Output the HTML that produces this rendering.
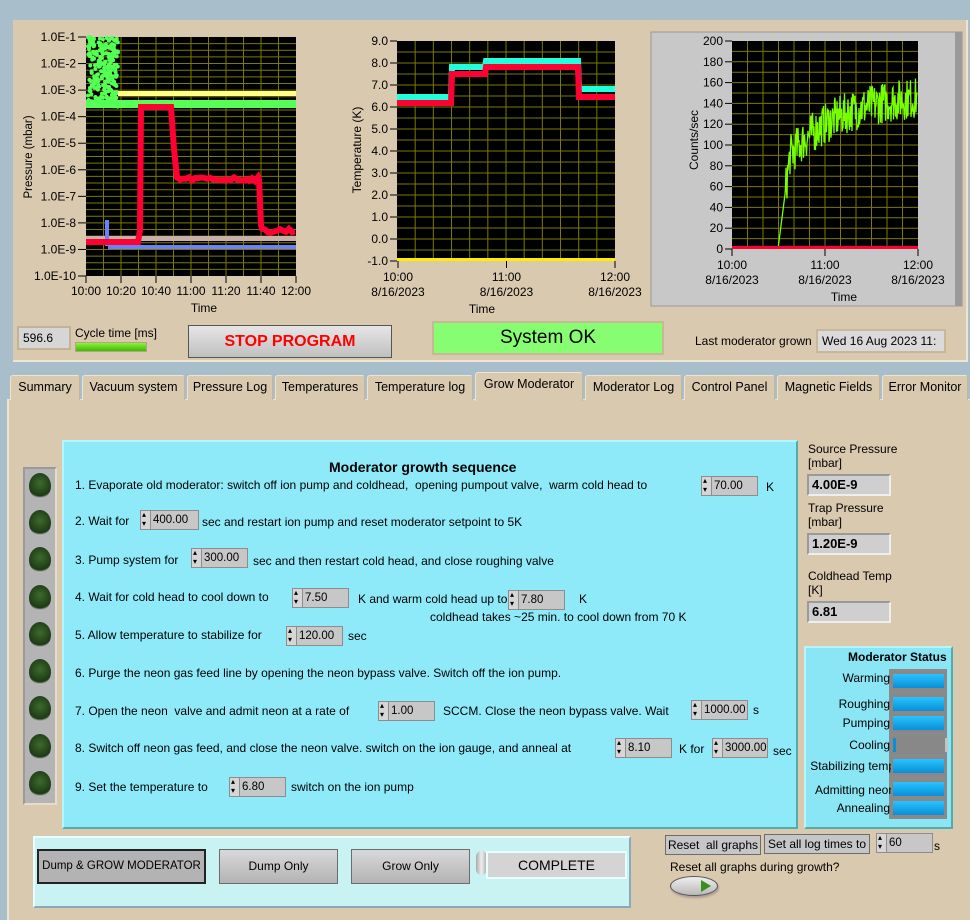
<!DOCTYPE html>
<html><head><meta charset="utf-8"><style>
*{margin:0;padding:0;box-sizing:border-box}
body{width:970px;height:920px;background:#a8bfcb;font-family:"Liberation Sans",sans-serif;font-size:12px;color:#000;position:relative;overflow:hidden}
.a{position:absolute}
.panel{background:#d9c9af}
.tab{position:absolute;top:375px;height:25px;background:#d9c9af;border:1px solid #c6b698;border-bottom:none;border-top:1px solid #efe4d0;border-left:1px solid #efe4d0;text-align:center;line-height:23px;font-size:12.5px;border-radius:3px 3px 0 0}
.sp{position:absolute;height:20px;background:#c7c7c7;border:1px solid #8d8d8d;font-size:11.5px;line-height:18px;padding-left:12px;white-space:nowrap;overflow:hidden}
.sp:before{content:"";position:absolute;left:0;top:0;width:9px;height:18px;background:#d6d6d6;border-right:1px solid #8d8d8d}
.sp:after{content:"▴\A▾";white-space:pre;position:absolute;left:1px;top:-1px;font-size:8px;line-height:9px}
.t{position:absolute;font-size:12px;white-space:nowrap}
.led{position:absolute;left:29px;width:22px;height:26px;border-radius:50%;background:radial-gradient(circle at 50% 40%,#3e6a2e,#1c3a14 65%,#a9a9a9 75%,#e0e0e0 90%)}
.ind{position:absolute;background:#cfcfcf;border:2px solid #9a9a9a;border-right-color:#eee;border-bottom-color:#eee;font-weight:bold;font-size:13px;line-height:17px;padding-left:3px}
.bar{position:absolute;left:891px;width:55px;height:18px;background:#888;padding:2px}
.bar i{display:block;height:14px;background:linear-gradient(#27c3ff,#0a8fd6)}
.btn{position:absolute;background:linear-gradient(#d9d9d9,#b3b3b3);border:1px solid #6c6c6c;text-align:center;font-size:12px;white-space:nowrap}
.sl{position:absolute;font-size:12px;text-align:right;width:80px;left:810px}
</style></head><body>
<div class="a panel" style="left:13px;top:20px;width:955px;height:342px;border-right:2px solid #efe4d0;border-bottom:2px solid #efe4d0"></div>
<svg class="a" style="left:0;top:0" width="970" height="370" id="charts" font-family="Liberation Sans" font-size="12"></svg>
<div class="a" style="left:17px;top:326px;width:54px;height:24px;background:#d6d6d6;border:2px solid #c2b394;padding:3px 4px;font-size:12px">596.6</div>
<div class="t" style="left:75px;top:326px">Cycle time [ms]</div>
<div class="a" style="left:75px;top:342px;width:72px;height:10px;background:linear-gradient(#8ef040,#3eb800);border:1px solid #b4a58a"></div>
<div class="a" style="left:188px;top:325px;width:204px;height:33px;background:linear-gradient(#e6e6e6,#c0c0c0);border:1px solid #555;color:#f00;font-weight:bold;font-size:16px;text-align:center;line-height:31px">STOP PROGRAM</div>
<div class="a" style="left:432px;top:321px;width:232px;height:34px;background:#87fd71;border:2px solid #c8b898;font-size:19px;text-align:center;line-height:30px">System OK</div>
<div class="t" style="left:695px;top:334px">Last moderator grown</div>
<div class="a" style="left:816px;top:329px;width:130px;height:24px;background:#dadada;border:2px solid #c8b898;padding:3px 4px;font-size:12px;white-space:nowrap;overflow:hidden">Wed 16 Aug 2023 11:</div>
<div class="a panel" style="left:7px;top:399px;width:963px;height:521px;border-left:2px solid #efe4d0;border-top:1px solid #efe4d0"></div>
<div class="tab" style="left:10px;width:70px">Summary</div>
<div class="tab" style="left:82px;width:103px">Vacuum system</div>
<div class="tab" style="left:187px;width:86px">Pressure Log</div>
<div class="tab" style="left:275px;width:90px">Temperatures</div>
<div class="tab" style="left:367px;width:106px">Temperature log</div>
<div class="tab" style="left:475px;width:108px;top:372px;height:29px;border-bottom:none">Grow Moderator</div>
<div class="tab" style="left:585px;width:97px">Moderator Log</div>
<div class="tab" style="left:684px;width:91px">Control Panel</div>
<div class="tab" style="left:777px;width:103px">Magnetic Fields</div>
<div class="tab" style="left:882px;width:86px">Error Monitor</div>
<div class="a" style="left:23px;top:467px;width:34px;height:338px;background:#b4b4b4;border:2px solid #9a9a9a;border-right-color:#e6dccb;border-bottom-color:#e6dccb"></div>
<div class="led" style="top:473px"></div><div class="led" style="top:510px"></div><div class="led" style="top:547px"></div><div class="led" style="top:585px"></div><div class="led" style="top:622px"></div><div class="led" style="top:659px"></div><div class="led" style="top:696px"></div><div class="led" style="top:734px"></div><div class="led" style="top:771px"></div>
<div class="a" style="left:62px;top:440px;width:736px;height:389px;background:#8eeaf9;border:2px solid #b4f6ff;border-right-color:#5aa;border-bottom-color:#5aa"></div>
<div class="t" style="left:329px;top:459px;font-weight:bold;font-size:14px">Moderator growth sequence</div>
<div class="t" style="left:75px;top:478px">1. Evaporate old moderator: switch off ion pump and coldhead,&nbsp; opening pumpout valve,&nbsp; warm cold head to</div>
<div class="sp" style="left:701px;top:476px;width:57px">70.00</div><div class="t" style="left:766px;top:480px">K</div>
<div class="t" style="left:75px;top:514px">2. Wait for</div><div class="sp" style="left:140px;top:510px;width:59px">400.00</div><div class="t" style="left:202px;top:515px">sec and restart ion pump and reset moderator setpoint to 5K</div>
<div class="t" style="left:75px;top:553px">3. Pump system for</div><div class="sp" style="left:191px;top:548px;width:57px">300.00</div><div class="t" style="left:253px;top:554px">sec and then restart cold head, and close roughing valve</div>
<div class="t" style="left:75px;top:590px">4. Wait for cold head to cool down to</div><div class="sp" style="left:292px;top:588px;width:57px">7.50</div><div class="t" style="left:358px;top:592px">K and warm cold head up to</div><div class="sp" style="left:508px;top:590px;width:57px">7.80</div><div class="t" style="left:579px;top:592px">K</div>
<div class="t" style="left:430px;top:610px">coldhead takes ~25 min. to cool down from 70 K</div>
<div class="t" style="left:75px;top:628px">5. Allow temperature to stabilize for</div><div class="sp" style="left:286px;top:626px;width:57px">120.00</div><div class="t" style="left:348px;top:629px">sec</div>
<div class="t" style="left:75px;top:666px">6. Purge the neon gas feed line by opening the neon bypass valve. Switch off the ion pump.</div>
<div class="t" style="left:75px;top:704px">7. Open the neon&nbsp; valve and admit neon at a rate of</div><div class="sp" style="left:378px;top:701px;width:57px">1.00</div><div class="t" style="left:443px;top:704px">SCCM. Close the neon bypass valve. Wait</div><div class="sp" style="left:691px;top:700px;width:57px">1000.00</div><div class="t" style="left:753px;top:703px">s</div>
<div class="t" style="left:75px;top:741px">8. Switch off neon gas feed, and close the neon valve. switch on the ion gauge, and anneal at</div><div class="sp" style="left:615px;top:738px;width:57px">8.10</div><div class="t" style="left:679px;top:742px">K for</div><div class="sp" style="left:712px;top:738px;width:56px">3000.00</div><div class="t" style="left:773px;top:744px">sec</div>
<div class="t" style="left:75px;top:780px">9. Set the temperature to</div><div class="sp" style="left:229px;top:777px;width:57px">6.80</div><div class="t" style="left:291px;top:780px">switch on the ion pump</div>
<div class="t" style="left:808px;top:442px">Source Pressure<br>[mbar]</div>
<div class="ind" style="left:807px;top:474px;width:84px;height:22px">4.00E-9</div>
<div class="t" style="left:808px;top:501px">Trap Pressure<br>[mbar]</div>
<div class="ind" style="left:807px;top:533px;width:84px;height:22px">1.20E-9</div>
<div class="t" style="left:808px;top:569px">Coldhead Temp<br>[K]</div>
<div class="ind" style="left:807px;top:601px;width:84px;height:22px">6.81</div>
<div class="a" style="left:804px;top:646px;width:149px;height:183px;background:#8ae5f4;border:2px solid #b8f4fc;border-right-color:#5aa;border-bottom-color:#5aa"></div>
<div class="t" style="left:848px;top:650px;font-weight:bold">Moderator Status</div>
<div class="a" style="left:889px;top:669px;width:58px;height:150px;background:#8a8a8a"></div>
<div class="sl" style="top:671px">Warming</div><div class="bar" style="top:672px"><i></i></div>
<div class="sl" style="top:697px">Roughing</div><div class="bar" style="top:695px"><i></i></div>
<div class="sl" style="top:716px">Pumping</div><div class="bar" style="top:714px"><i></i></div>
<div class="sl" style="top:738px">Cooling</div><div class="bar" style="top:736px"><i style="width:3px;background:#0a8fd6;box-shadow:52px 0 0 #c4c4c4"></i></div>
<div class="sl" style="top:759px;left:800px;width:95px">Stabilizing temp</div><div class="bar" style="top:757px"><i></i></div>
<div class="sl" style="top:783px;left:800px;width:95px">Admitting neon</div><div class="bar" style="top:780px"><i></i></div>
<div class="sl" style="top:801px">Annealing</div><div class="bar" style="top:799px"><i></i></div>
<div class="a" style="left:33px;top:836px;width:598px;height:72px;background:#c9f3f2;border:2px solid #e8fdfd;border-right-color:#8ab;border-bottom-color:#8ab"></div>
<div class="btn" style="left:37px;top:849px;width:169px;height:35px;line-height:31px;border:2px solid #222;background:#b3b3b3;font-size:11.5px">Dump &amp; GROW MODERATOR</div>
<div class="btn" style="left:219px;top:849px;width:119px;height:35px;line-height:33px">Dump Only</div>
<div class="btn" style="left:351px;top:849px;width:119px;height:35px;line-height:33px">Grow Only</div>
<div class="a" style="left:476px;top:851px;width:11px;height:24px;border-radius:6px;background:linear-gradient(90deg,#aaa,#eee,#aaa)"></div>
<div class="a" style="left:486px;top:851px;width:141px;height:28px;background:#d4d4d4;border:2px solid #e6ffff;text-align:center;line-height:24px;font-size:14px">COMPLETE</div>
<div class="btn" style="left:665px;top:835px;width:96px;height:20px;line-height:18px;background:#c6c6c6">Reset&nbsp; all graphs</div>
<div class="btn" style="left:764px;top:834px;width:106px;height:20px;line-height:18px;background:#c6c6c6">Set all log times to</div>
<div class="sp" style="left:876px;top:833px;width:57px">60</div><div class="t" style="left:934px;top:839px">s</div>
<div class="t" style="left:670px;top:860px">Reset all graphs during growth?</div>
<div class="a" style="left:670px;top:876px;width:48px;height:20px;border-radius:50%;background:linear-gradient(#eee,#b9b9b9);border:1px solid #555;box-shadow:1px 2px 2px #a99"></div>
<div class="a" style="left:701px;top:880px;width:0;height:0;border-left:10px solid #3c8c20;border-top:6px solid transparent;border-bottom:6px solid transparent"></div>
<script>
var s=document.getElementById('charts'),h='';
var seed=7;function r(){seed=(seed*16807)%2147483647;return seed/2147483647;}
function grid(x0,y0,x1,y1,nx,ny){var g='<rect x="'+x0+'" y="'+y0+'" width="'+(x1-x0)+'" height="'+(y1-y0)+'" fill="#000"/>';
for(var i=1;i<nx;i++){var x=x0+(x1-x0)*i/nx;g+='<line x1="'+x+'" y1="'+y0+'" x2="'+x+'" y2="'+y1+'" stroke="#7a7a00" stroke-width="1"/>';}
for(var j=1;j<ny;j++){var y=y0+(y1-y0)*j/ny;g+='<line x1="'+x0+'" y1="'+y+'" x2="'+x1+'" y2="'+y+'" stroke="#7a7a00" stroke-width="1"/>';}return g;}
function pl(pts,c,w){return '<polyline fill="none" stroke="'+c+'" stroke-width="'+w+'" points="'+pts.join(' ')+'"/>';}
h+=grid(86,37,296,276,12,36);
for(var j=0;j<=9;j++){var y=37+239*j/9;h+='<text x="76" y="'+(y+4)+'" text-anchor="end">'+(j==9?'1.0E-10':'1.0E-'+(j+1))+'</text><line x1="78" y1="'+y+'" x2="86" y2="'+y+'" stroke="#000"/>';}
var tl=['10:00','10:20','10:40','11:00','11:20','11:40','12:00'];
for(var i=0;i<7;i++){var x=86+35*i;h+='<text x="'+x+'" y="295" text-anchor="middle">'+tl[i]+'</text><line x1="'+x+'" y1="276" x2="'+x+'" y2="283" stroke="#000"/>';}
h+='<text x="204" y="312" text-anchor="middle">Time</text><text transform="translate(32,157) rotate(-90)" text-anchor="middle" font-size="11.5">Pressure (mbar)</text>';
for(var k=0;k<260;k++){var x=88+r()*30,y=37+r()*70;h+='<circle cx="'+x.toFixed(1)+'" cy="'+y.toFixed(1)+'" r="2" fill="#5f5"/>';}
h+='<rect x="86" y="100" width="210" height="8" fill="#5f5"/>';
h+='<rect x="118" y="91" width="178" height="5" fill="#ff8"/>';
h+='<rect x="86" y="236" width="210" height="5" fill="#c8b0a8"/><rect x="108" y="245" width="188" height="4" fill="#6a80ff"/><rect x="105" y="220" width="4" height="26" fill="#6a80ff"/>';
var p=[];p.push('86,242','138,242','140,230','141,107','171,107');for(var x=171;x<=259;x+=3)p.push(x+','+(x<176?107+(x-171)*14:177+r()*4));p.push('259,180','261,225');for(var x=262;x<=296;x+=3)p.push(x+','+(228+r()*5));
h+=pl(p,'#f03',6);
h+=grid(397,41,615,261,12,20);
for(var j=0;j<=10;j++){var y=41+22*j;h+='<text x="388" y="'+(y+4)+'" text-anchor="end">'+(9-j).toFixed(1)+'</text><line x1="390" y1="'+y+'" x2="397" y2="'+y+'" stroke="#000"/>';}
var dl=['10:00','11:00','12:00'];for(var i=0;i<3;i++){var x=398+108.5*i;h+='<text x="'+x+'" y="281" text-anchor="middle">'+dl[i]+'</text><text x="'+x+'" y="296" text-anchor="middle">8/16/2023</text><line x1="'+x+'" y1="261" x2="'+x+'" y2="268" stroke="#000"/>';}
h+='<text x="482" y="313" text-anchor="middle">Time</text><text transform="translate(361,150) rotate(-90)" text-anchor="middle">Temperature (K)</text>';
h+=pl(['397,97','451,97','452,67','485,67','486,61','578,61','579,89','615,89'],'#2fd',6);
h+=pl(['397,103','451,103','452,74','485,74','486,67','578,67','579,97','615,97'],'#f03',6);
h+='<rect x="397" y="258" width="218" height="3" fill="#fe0"/>';
h+='<rect x="651" y="32" width="311" height="274" fill="#c8c8c8" stroke="#999"/><rect x="955" y="32" width="7" height="274" fill="#9a9a9a"/>';
h+=grid(732,41,918,249,12,20);
for(var j=0;j<=10;j++){var y=41+20.8*j;h+='<text x="723" y="'+(y+4)+'" text-anchor="end">'+(200-20*j)+'</text><line x1="725" y1="'+y+'" x2="732" y2="'+y+'" stroke="#000"/>';}
for(var i=0;i<3;i++){var x=732+93*i;h+='<text x="'+x+'" y="269" text-anchor="middle">'+dl[i]+'</text><text x="'+x+'" y="284" text-anchor="middle">8/16/2023</text><line x1="'+x+'" y1="249" x2="'+x+'" y2="256" stroke="#000"/>';}
h+='<text x="844" y="301" text-anchor="middle">Time</text><text transform="translate(698,140) rotate(-90)" text-anchor="middle">Counts/sec</text>';
var g=[];for(var x=733;x<=917;x+=0.5){var v;if(x<778)v=0;else if(x<790)v=(x-778)/12*90;else v=90+60*(1-Math.exp(-(x-790)/50));v+=(x>785?(r()-0.5)*40:0);var y=249-v*1.04;g.push(x.toFixed(1)+','+Math.min(248,y).toFixed(1));}
h+=pl(g,'#7f0',1.3);
h+='<rect x="732" y="246" width="186" height="3" fill="#f03"/>';
s.innerHTML=h;
</script>
</body></html>
